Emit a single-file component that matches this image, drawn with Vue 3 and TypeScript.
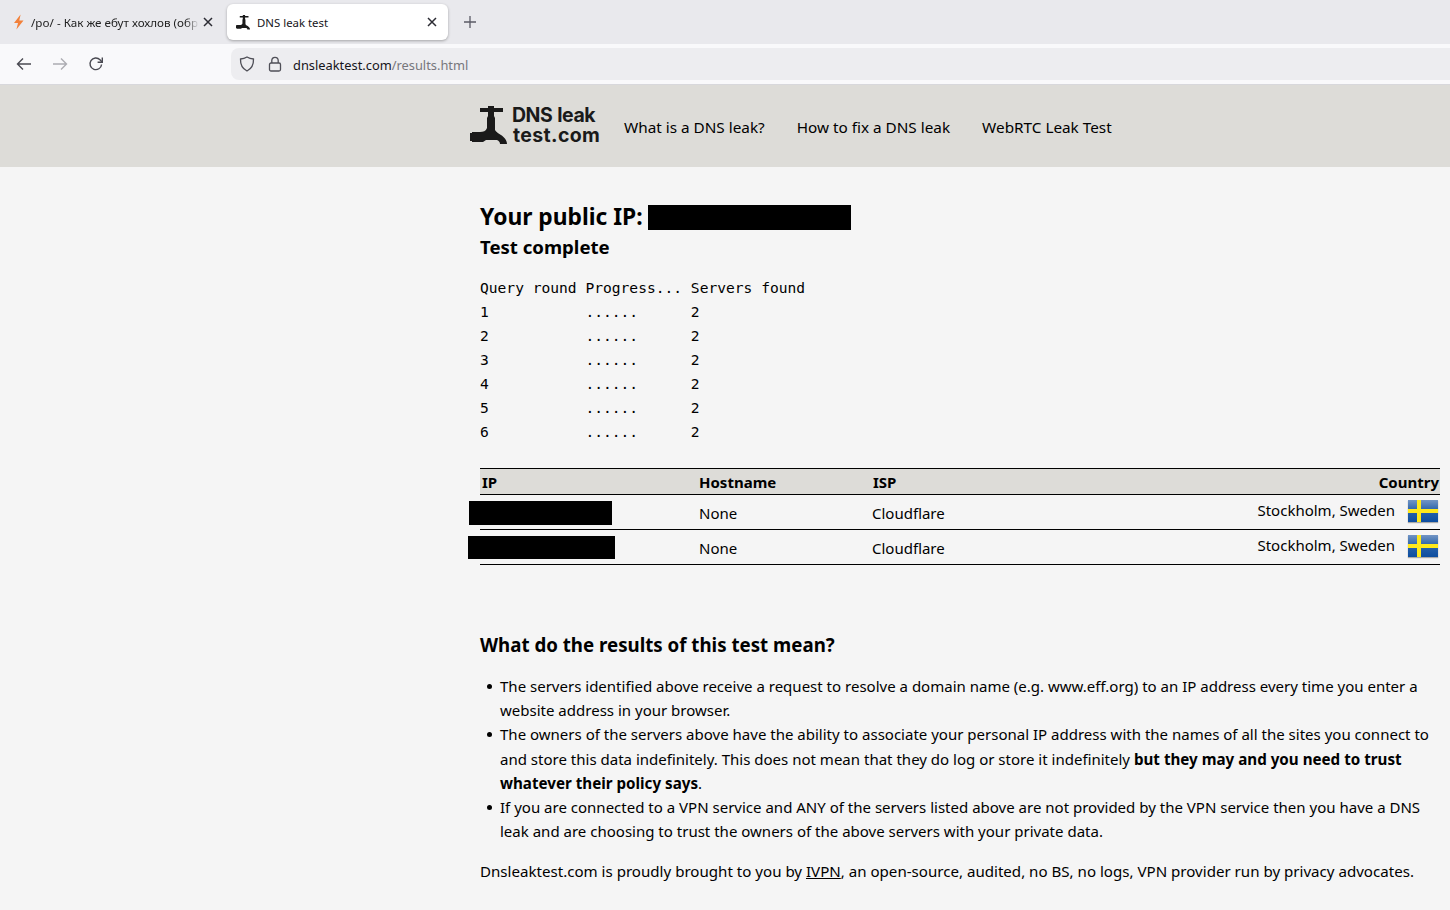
<script setup lang="ts">
const rounds = [1, 2, 3, 4, 5, 6]
const header = 'Query round Progress... Servers found'
const lines = rounds.map((r) => String(r).padEnd(12, ' ') + '......'.padEnd(12, ' ') + '2')
const rows = [
  { w: 143, h: 24, ml: -11, mt: 1 },
  { w: 147, h: 23, ml: -12, mt: 0 },
]
</script>

<template>
  <div class="page">
    <div class="tabbar">
      <div class="tab inactive">
        <svg class="tabicon" width="16" height="16" viewBox="0 0 16 16"><path d="M9.600 0.500 3 9h4l-1.600 6.500L12.500 6.500H8.300L9.600 0.500z" fill="#f2803a"/></svg>
        <span class="tabtitle fade">/po/ - Как же ебут хохлов (обр</span>
        <svg class="x" width="10" height="10" viewBox="0 0 10 10"><path d="M1 1l8 8M9 1l-8 8" stroke="#2b2b33" stroke-width="1.5"/></svg>
      </div>
      <div class="tab active">
        <svg class="tabicon tapsmall" width="14" height="15" viewBox="0 0 37 39"><path class="tapfill" d="M10 2H18V0H24V2H33V6H24V10L25 12V24C26 26 28 27 31 29C34 31 37 34 37 38H30C30 36 29 35 27 34H16L13 36H2V35H0V27H2V26H10C13 26 16 25 17 22V12L18 10V6H10Z"/></svg>
        <span class="tabtitle dark">DNS leak test</span>
        <svg class="x x2" width="10" height="10" viewBox="0 0 10 10"><path d="M1 1l8 8M9 1l-8 8" stroke="#2b2b33" stroke-width="1.5"/></svg>
      </div>
      <svg class="plus" width="14" height="14" viewBox="0 0 14 14"><path d="M7 1v12M1 7h12" stroke="#5b5b66" stroke-width="1.300"/></svg>
    </div>

    <div class="toolbar">
      <div class="navbtns">
        <svg width="16" height="16" viewBox="0 0 16 16" fill="none" stroke="#4a4a52" stroke-width="1.400"><path d="M15 8H1.600M7 2.500 1.500 8 7 13.500"/></svg>
        <svg width="16" height="16" viewBox="0 0 16 16" fill="none" stroke="#acacb2" stroke-width="1.400"><path d="M1 8h13.400M9 2.500 14.500 8 9 13.500"/></svg>
        <svg width="16" height="16" viewBox="0 0 16 16" fill="none" stroke="#4a4a52" stroke-width="1.400"><path d="M13.600 8.500A5.800 5.800 0 1 1 12 3.800L14 6"/><path d="M14.300 1.500V6.200H9.600"/></svg>
      </div>
      <div class="urlbar">
        <svg width="16" height="16" viewBox="0 0 16 16" fill="none" stroke="#4f4f57" stroke-width="1.300"><path d="M8 1c2 1.200 4 1.800 6.500 2 .2 5.500-1.500 9.500-6.500 12C3 12.500 1.300 8.500 1.500 3 4 2.800 6 2.200 8 1z"/></svg>
        <svg class="lock" width="16" height="16" viewBox="0 0 16 16" fill="none" stroke="#4f4f57" stroke-width="1.300"><rect x="2.500" y="7" width="11" height="8" rx="1.500"/><path d="M4.800 7V4.500a3.200 3.200 0 0 1 6.400 0V7"/></svg>
        <span class="url">dnsleaktest.com<span class="path">/results.html</span></span>
      </div>
    </div>

    <header class="header">
      <div class="logo">
        <svg class="tap" width="37" height="39" viewBox="0 0 37 39"><path class="tapfill" d="M10 2H18V0H24V2H33V6H24V10L25 12V24C26 26 28 27 31 29C34 31 37 34 37 38H30C30 36 29 35 27 34H16L13 36H2V35H0V27H2V26H10C13 26 16 25 17 22V12L18 10V6H10Z"/></svg>
        <div class="logotext"><div>DNS leak</div><div class="l2">test.com</div></div>
      </div>
      <nav class="nav">
        <span>What is a DNS leak?</span>
        <span>How to fix a DNS leak</span>
        <span>WebRTC Leak Test</span>
      </nav>
    </header>

    <main class="main">
      <h1 class="h1">Your public IP: <span class="blackout"></span></h1>
      <h2 class="h2">Test complete</h2>
      <div class="mono">
        <div>{{ header }}</div>
        <div v-for="l in lines" :key="l">{{ l }}</div>
      </div>

      <table class="results">
        <thead>
          <tr><th class="c1">IP</th><th class="c2">Hostname</th><th class="c3">ISP</th><th class="c4">Country</th></tr>
        </thead>
        <tbody>
          <tr v-for="(row, i) in rows" :key="i">
            <td class="c1"><span class="ipbox" :style="{ width: row.w + 'px', height: row.h + 'px', marginLeft: row.ml + 'px', marginTop: row.mt + 'px' }"></span></td>
            <td class="c2">None</td>
            <td class="c3">Cloudflare</td>
            <td class="c4">
              <div class="loc">
                <span class="city">Stockholm, Sweden</span>
                <span class="flag"><i class="fv"></i><i class="fh"></i></span>
              </div>
            </td>
          </tr>
        </tbody>
      </table>

      <h3 class="h3">What do the results of this test mean?</h3>
      <ul class="list">
        <li>The servers identified above receive a request to resolve a domain name (e.g. www.eff.org) to an IP address every time you enter a website address in your browser.</li>
        <li>The owners of the servers above have the ability to associate your personal IP address with the names of all the sites you connect to and store this data indefinitely. This does not mean that they do log or store it indefinitely <b>but they may and you need to trust whatever their policy says</b>.</li>
        <li>If you are connected to a VPN service and ANY of the servers listed above are not provided by the VPN service then you have a DNS leak and are choosing to trust the owners of the above servers with your private data.</li>
      </ul>
      <p class="foot">Dnsleaktest.com is proudly brought to you by <u>IVPN</u>, an open-source, audited, no BS, no logs, VPN provider run by privacy advocates.</p>
    </main>
  </div>
</template>

<style>
html, body { margin: 0; background: #f5f5f5; overflow: hidden; }
</style>

<style scoped>
.page { width: 1450px; height: 910px; overflow: hidden; background: #f5f5f5; color: #000; font-family: "Noto Sans", "Open Sans", sans-serif; font-size: 15.1px; }
.tapfill { fill: #1a1a1a; }
.tabbar { height: 44px; background: #e9e9ed; display: flex; align-items: flex-start; padding-top: 4px; box-sizing: border-box; }
.tab { height: 36px; box-sizing: border-box; display: flex; align-items: center; font-size: 11.4px; border-radius: 6px; }
.tab.inactive { width: 223px; padding-left: 11px; }
.tab.active { width: 221px; margin-left: 4px; padding-left: 9px; background: #fff; box-shadow: 0 1px 3px rgba(0,0,0,.3); }
.tabicon { flex: none; }
.tabtitle { margin-left: 4px; width: 168px; overflow: hidden; white-space: nowrap; color: #222; }
.fade { font-size: 11.650px; -webkit-mask-image: linear-gradient(90deg, #000 92%, transparent); mask-image: linear-gradient(90deg, #000 92%, transparent); }
.tabtitle.dark { margin-left: 7px; width: 170px; color: #15141a; }
.x { margin-left: 4px; flex: none; }
.x2 { margin-left: 0; }
.plus { margin: 11px 0 0 15px; }
.toolbar { height: 40px; background: #f9f9fb; border-bottom: 1px solid #d8d8dc; display: flex; align-items: center; }
.navbtns { display: flex; gap: 20px; padding-left: 16px; width: 231px; box-sizing: border-box; }
.urlbar { flex: 1; height: 32px; background: #ededf0; border-radius: 8px 0 0 8px; display: flex; align-items: center; padding-left: 8px; }
.lock { margin-left: 12px; }
.url { margin-left: 10px; font-size: 12.850px; color: #15141a; padding-top: 1px; }
.path { color: #77777c; }
.header { height: 82px; background: #dddcd8; display: flex; align-items: center; padding-left: 470px; box-sizing: border-box; }
.logo { display: flex; align-items: center; width: 154px; margin-top: -2px; }
.tap { flex: none; }
.logotext { margin-left: 5px; font-family: "Inter", sans-serif; font-weight: 700; font-size: 19.500px; line-height: 20px; letter-spacing: -0.5px; word-spacing: 1px; color: #1a1a1a; }
.l2 { margin-left: 1px; letter-spacing: 0.350px; }
.nav { display: flex; gap: 32px; margin-top: 2px; font-size: 15.300px; }
.main { padding: 36px 10px 0 480px; }
.h1 { margin: 0; font-size: 22.800px; line-height: 28px; font-weight: 700; display: flex; align-items: center; white-space: pre; height: 28px; }
.blackout { display: inline-block; width: 203px; height: 25px; margin-left: -1px; background: #000; }
.h2 { margin: 2px 0 0; font-size: 18.600px; line-height: 27px; font-weight: 700; }
.mono { margin-top: 16px; font-family: "DejaVu Sans Mono", monospace; font-size: 14.600px; line-height: 24px; white-space: pre; }
.results { margin-top: 24px; width: 960px; border-collapse: collapse; table-layout: fixed; }
.results th { height: 25px; padding: 0; background: #dddcd8; border-top: 1px solid #000; border-bottom: 1px solid #000; text-align: left; font-size: 15px; font-weight: 700; }
.results th.c1 { padding-left: 2px; }
.results th.c3 { padding-left: 1px; }
.results td { box-sizing: border-box; height: 35px; padding: 0; border-bottom: 1px solid #000; font-size: 15px; }
.results td.c2, .results td.c3 { padding-top: 1px; }
.c1 { width: 217px; }
.c2 { width: 173px; }
.c3 { width: 300px; }
.results th.c4 { text-align: right; padding-right: 1px; }
.ipbox { display: block; background: #000; }
.loc { display: flex; justify-content: flex-end; align-items: center; gap: 13px; padding-right: 2px; margin-top: -2px; }
.city { margin-top: -2px; }
.flag { position: relative; display: block; width: 30px; height: 22px; background: linear-gradient(#7295c4, #2c64aa 45%, #0d4ea0); box-shadow: 0 1px 1px rgba(0,0,0,.3); overflow: hidden; }
.fv { position: absolute; left: 9px; top: 0; width: 4px; height: 22px; background: #ffe81a; }
.fh { position: absolute; left: 0; top: 9px; width: 30px; height: 4px; background: #ffe81a; }
.h3 { margin: 0; padding-top: 66px; font-size: 18.700px; line-height: 27px; font-weight: 700; }
.list { margin: 16px 0 0; padding: 0 0 0 20px; list-style: none; font-size: 15.020px; line-height: 24.170px; }
.list li { position: relative; }
.list li b { font-size: 15.180px; }
.list li::before { content: ""; position: absolute; left: -13px; top: 10px; width: 5px; height: 5px; border-radius: 50%; background: #000; }
.foot { margin: 16px 0 0; line-height: 24px; white-space: nowrap; }
</style>
